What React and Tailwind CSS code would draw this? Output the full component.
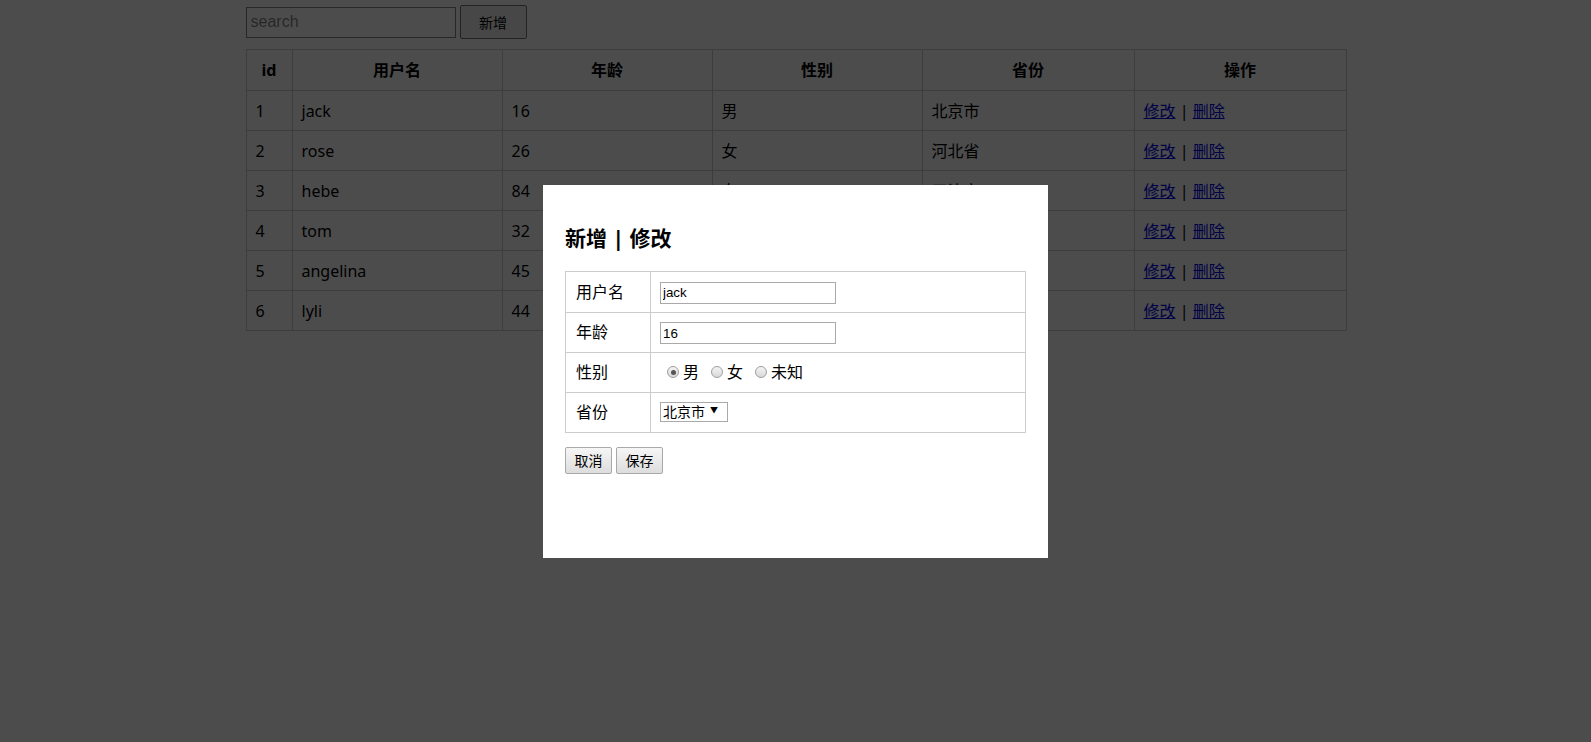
import React from 'react';

const users = [
  { id: 1, name: 'jack', age: 16, sex: '男', province: '北京市' },
  { id: 2, name: 'rose', age: 26, sex: '女', province: '河北省' },
  { id: 3, name: 'hebe', age: 84, sex: '女', province: '天津市' },
  { id: 4, name: 'tom', age: 32, sex: '男', province: '山东省' },
  { id: 5, name: 'angelina', age: 45, sex: '女', province: '河南省' },
  { id: 6, name: 'lyli', age: 44, sex: '男', province: '北京市' },
];

function Radio({ checked, label }) {
  return (
    <label className="flex items-center gap-[4px]">
      <span className="w-[12px] h-[12px] rounded-full border border-[#a0a0a0] bg-gradient-to-b from-[#f4f4f4] to-[#d8d8d8] flex items-center justify-center">
        {checked && <span className="w-[5px] h-[5px] rounded-full bg-[#555]" />}
      </span>
      <span className="text-[16px]">{label}</span>
    </label>
  );
}

export default function App() {
  return (
    <div className="relative min-h-screen bg-white text-black font-['Noto_Sans','Noto_Sans_CJK_SC',sans-serif]">
      <div className="w-[1100px] mx-auto pt-[5px]">
        <div className="flex items-center gap-[4px]">
          <input
            placeholder="search"
            className="w-[210px] h-[31px] border border-[#888] px-[4px] text-[16px] font-['Liberation_Sans',sans-serif] outline-none"
          />
          <button className="w-[67px] h-[34px] bg-[#efefef] border border-[#767676] rounded-[2px] text-[14px] font-['Noto_Sans_CJK_SC',sans-serif]">
            新增
          </button>
        </div>

        <table className="mt-[10px] w-full table-fixed border-collapse border border-[#ccc] text-[16px]">
          <colgroup>
            <col className="w-[46px]" />
            <col className="w-[210px]" />
            <col className="w-[210px]" />
            <col className="w-[210px]" />
            <col className="w-[212px]" />
            <col className="w-[212px]" />
          </colgroup>
          <thead>
            <tr className="h-[41px]">
              {['id', '用户名', '年龄', '性别', '省份', '操作'].map((h) => (
                <th key={h} className="border border-[#ccc] font-bold text-center">{h}</th>
              ))}
            </tr>
          </thead>
          <tbody>
            {users.map((u) => (
              <tr key={u.id} className="h-[40px]">
                <td className="border border-[#ccc] px-[9px]">{u.id}</td>
                <td className="border border-[#ccc] px-[9px]">{u.name}</td>
                <td className="border border-[#ccc] px-[9px]">{u.age}</td>
                <td className="border border-[#ccc] px-[9px]">{u.sex}</td>
                <td className="border border-[#ccc] px-[9px]">{u.province}</td>
                <td className="border border-[#ccc] px-[9px]">
                  <a href="#" className="text-[#0000ee] underline">修改</a> | <a href="#" className="text-[#0000ee] underline">删除</a>
                </td>
              </tr>
            ))}
          </tbody>
        </table>
      </div>

      {/* mask + dialog */}
      <div className="fixed inset-0 bg-black/70 flex items-center justify-center">
        <div className="w-[505px] h-[373px] bg-white px-[22px] pt-[33px]">
          <h3 className="h-[40px] leading-[40px] text-[21px] font-bold mb-[13px]">新增 | 修改</h3>
          <table className="w-full border-collapse border border-[#ccc] text-[16px]">
            <tbody>
              <tr className="h-[41px]">
                <td className="w-[85px] border border-[#ccc] pl-[10px]">用户名</td>
                <td className="border border-[#ccc] pl-[9px]">
                  <input defaultValue="jack" className="w-[176px] h-[22px] border border-[#a9a9a9] px-[2px] text-[13.33px] font-['Liberation_Sans',sans-serif] outline-none" />
                </td>
              </tr>
              <tr className="h-[40px]">
                <td className="border border-[#ccc] pl-[10px]">年龄</td>
                <td className="border border-[#ccc] pl-[9px]">
                  <input defaultValue="16" className="w-[176px] h-[22px] border border-[#a9a9a9] px-[2px] text-[13.33px] font-['Liberation_Sans',sans-serif] outline-none" />
                </td>
              </tr>
              <tr className="h-[40px]">
                <td className="border border-[#ccc] pl-[10px]">性别</td>
                <td className="border border-[#ccc] pl-[16px]">
                  <div className="flex items-center gap-[12px]">
                    <Radio checked label="男" />
                    <Radio label="女" />
                    <Radio label="未知" />
                  </div>
                </td>
              </tr>
              <tr className="h-[40px]">
                <td className="border border-[#ccc] pl-[10px]">省份</td>
                <td className="border border-[#ccc] pl-[9px]">
                  <div className="w-[68px] h-[20px] border border-[#a9a9a9] flex items-center pl-[2px] gap-[5px] text-[14px] leading-none overflow-hidden">
                    <span>北京市</span>
                    <span className="text-[8px] -mt-[4px]">▼</span>
                  </div>
                </td>
              </tr>
            </tbody>
          </table>
          <div className="mt-[14px] flex gap-[4px]">
            <button className="w-[47px] h-[27px] border border-[#a9a9a9] rounded-[2px] bg-gradient-to-b from-[#f6f6f6] to-[#dddddd] text-[14px]">取消</button>
            <button className="w-[47px] h-[27px] border border-[#a9a9a9] rounded-[2px] bg-gradient-to-b from-[#f6f6f6] to-[#dddddd] text-[14px]">保存</button>
          </div>
        </div>
      </div>
    </div>
  );
}
